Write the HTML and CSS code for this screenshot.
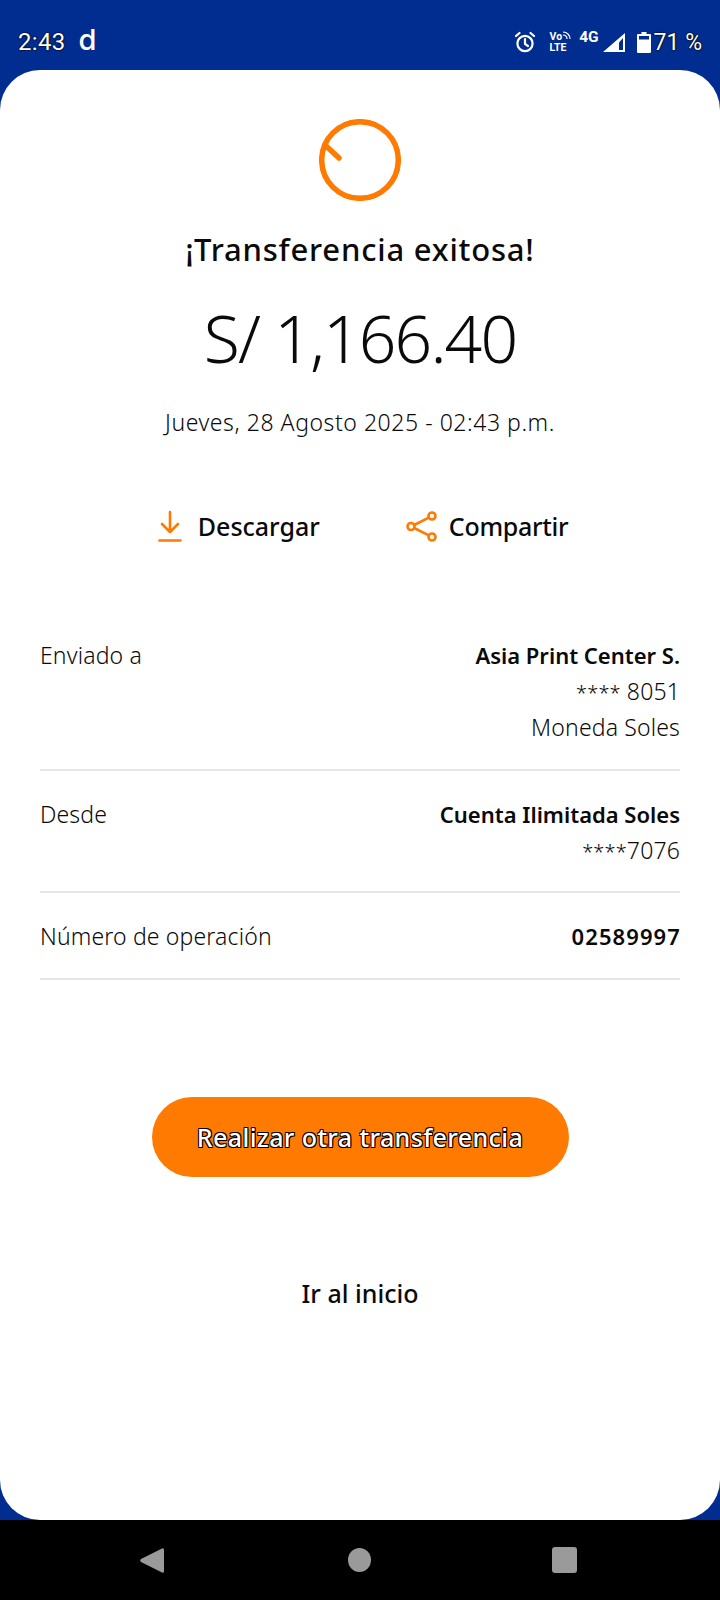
FILE: index.html
```html
<!DOCTYPE html>
<html lang="es">
<head>
    <meta charset="UTF-8">
    <meta name="viewport" content="width=device-width, initial-scale=1.0">
    <title>Transferencia exitosa</title>
    <link rel="stylesheet" href="styles.css">
</head>
<body>
    <div class="status-bar">
        <span class="clock">2:43</span>
        <span class="app-d">d</span>
        <div class="status-icons">
            <svg class="ic-alarm" width="22" height="22" viewBox="0 0 22 22" fill="none" stroke="#fff" stroke-width="2.2" stroke-linecap="round">
                <circle cx="11" cy="12.5" r="7.6"/>
                <path d="M11 8v5l3 2"/>
                <path d="M2 5l3.500-3M20 5l-3.500-3"/>
            </svg>
            <span class="volte">Vo<svg width="9" height="9" viewBox="0 0 9 9" fill="none" stroke="#fff" stroke-width="1.200"><path d="M1 1c4 0 7 3 7 7M1 4c2.500 0 4 1.500 4 4"/></svg><br>LTE</span>
            <span class="net">4G</span>
            <svg class="ic-signal" width="22" height="19" viewBox="0 0 22 19">
                <path d="M22 0v19H0z" fill="#fff"/>
                <path d="M20 5v12h-4V9.500z" fill="#002d8f"/>
            </svg>
            <svg class="ic-battery" width="14" height="21" viewBox="0 0 14 21">
                <path d="M4.500 0h5v2H13a1 1 0 0 1 1 1v17a1 1 0 0 1-1 1H1a1 1 0 0 1-1-1V3a1 1 0 0 1 1-1h3.500z" fill="#fff"/>
                <path d="M2 4h10v3.500H2z" fill="#002d8f"/>
            </svg>
            <span class="pct">71 %</span>
        </div>
    </div>

    <div class="card">
        <svg class="ic-done" width="82" height="82" viewBox="0 0 82 82" fill="none" stroke="#ff7a00" stroke-width="5.500" stroke-linecap="round">
            <circle cx="41" cy="41" r="38.300"/>
            <path d="M6 26l14 13"/>
        </svg>
        <h1 class="title">¡Transferencia exitosa!</h1>
        <div class="amount">S/ 1,166.40</div>
        <p class="date">Jueves, 28 Agosto 2025 - 02:43 p.m.</p>

        <div class="actions">
            <div class="action">
                <svg width="24" height="32" viewBox="0 0 24 32" fill="none" stroke="#ff7a00" stroke-width="2.600" stroke-linecap="round" stroke-linejoin="round">
                    <path d="M12 2v20M4 14l8 8 8-8"/>
                    <path d="M1.500 30.500h21"/>
                </svg>
                <span>Descargar</span>
            </div>
            <div class="action action-share">
                <svg width="31" height="31" viewBox="0 0 31 31" fill="none" stroke="#ff7a00" stroke-width="2.600">
                    <circle cx="5" cy="15.500" r="3.500"/>
                    <circle cx="26" cy="5" r="3.500"/>
                    <circle cx="26" cy="26" r="3.500"/>
                    <path d="M8.200 14L22.800 6.600M8.200 17l14.600 7.400"/>
                </svg>
                <span>Compartir</span>
            </div>
        </div>

        <div class="details">
            <div class="row row-first">
                <span class="label">Enviado a</span>
                <div class="value"><b>Asia Print Center S.</b><br><span class="stars">****</span> 8051<br>Moneda Soles</div>
            </div>
            <div class="row">
                <span class="label">Desde</span>
                <div class="value"><b>Cuenta Ilimitada Soles</b><br><span class="stars">****</span>7076</div>
            </div>
            <div class="row row-last">
                <span class="label">Número de operación</span>
                <div class="value"><b class="num">02589997</b></div>
            </div>
        </div>

        <button type="button" class="btn-main">Realizar otra transferencia</button>
        <div class="link-home">Ir al inicio</div>
    </div>

    <div class="nav-bar">
        <svg class="nav-back" width="24" height="27" viewBox="0 0 24 27"><path d="M22 1.500a1.500 1.500 0 0 1 2 1v22a1.500 1.500 0 0 1-2 1L1 15a2 2 0 0 1 0-3z" fill="#9a9a9a"/></svg>
        <span class="nav-home"></span>
        <span class="nav-recent"></span>
    </div>
</body>
</html>
```

FILE: styles.css
```css
/* Global Styles */
* {
    margin: 0;
    padding: 0;
    box-sizing: border-box;
}
body {
    width: 720px;
    height: 1600px;
    overflow: hidden;
    background: #002d8f;
    font-family: 'Noto Sans', sans-serif;
    color: #0a0a0a;
    display: flex;
    flex-direction: column;
}

/* Status bar */
.status-bar {
    height: 70px;
    display: flex;
    align-items: center;
    padding: 14px 18px 0;
    color: #fff;
}
.clock, .pct {
    font-family: 'Roboto', sans-serif;
    font-size: 24px;
    text-shadow: 0 0 2px #000, 0 0 1px #000, 0 0 1px #000;
}
.clock {
    letter-spacing: 0.3px;
}
.app-d {
    margin-left: 13px;
    margin-top: -6px;
    font-family: 'Inter', sans-serif;
    font-size: 29px;
    font-weight: 500;
}
.status-icons {
    margin-left: auto;
    display: flex;
    align-items: center;
}
.volte {
    margin-left: 14px;
    font-family: 'Roboto', sans-serif;
    font-size: 10.500px;
    font-weight: 700;
    line-height: 11px;
}
.net {
    margin: -10px 0 0 8px;
    font-family: 'Roboto', sans-serif;
    font-size: 15.500px;
    font-weight: 700;
}
.ic-signal {
    margin-left: 4px;
}
.ic-battery {
    margin-left: 12px;
}
.pct {
    margin-left: 3px;
    font-size: 23px;
}

/* Card */
.card {
    flex: 1;
    background: #fff;
    border-radius: 40px;
    padding: 49px 40px 0;
    display: flex;
    flex-direction: column;
    align-items: center;
}
.title {
    margin-top: 28px;
    font-size: 31px;
    line-height: 40px;
    font-weight: 500;
    letter-spacing: 0.8px;
}
.amount {
    margin-top: 25px;
    font-size: 66px;
    line-height: 86px;
    font-weight: 300;
    letter-spacing: -1.900px;
}
.date {
    margin-top: 26px;
    font-size: 23px;
    line-height: 32px;
    font-weight: 300;
    letter-spacing: 0.55px;
}

/* Actions */
.actions {
    margin-top: 70px;
    margin-left: 6px;
    display: flex;
    align-items: center;
    height: 36px;
}
.action {
    display: flex;
    align-items: center;
    gap: 16px;
    font-size: 25px;
    font-weight: 500;
}
.action-share {
    margin-left: 86px;
    gap: 12px;
    letter-spacing: -0.300px;
}

/* Details */
.details {
    width: 100%;
    margin-top: 93px;
    font-size: 23px;
    line-height: 36px;
    letter-spacing: 0.15px;
}
.row {
    display: flex;
    justify-content: space-between;
    padding: 25px 0 23px;
    border-bottom: 2px solid #e4e6e8;
}
.row-first {
    padding: 0 0 24px;
}
.row-last {
    padding-bottom: 24px;
}
.label {
    font-weight: 300;
}
.value {
    text-align: right;
    font-weight: 300;
}
.value b {
    font-size: 22px;
    line-height: 1;
    font-weight: 600;
    letter-spacing: 0;
}
.value .num {
    letter-spacing: 1.100px;
    margin-right: -1px;
}
.stars {
    font-size: 20px;
    line-height: 1;
}

/* Buttons */
.btn-main {
    margin-top: 117px;
    width: 417px;
    height: 80px;
    border: none;
    border-radius: 40px;
    background: #ff7a00;
    color: #fff;
    font-family: inherit;
    font-size: 25px;
    font-weight: 500;
    letter-spacing: 0.4px;
    text-shadow: 1px 1px 0 #000, -1px -1px 0 #000, 1px -1px 0 #000, -1px 1px 0 #000;
}
.link-home {
    margin-top: 98px;
    font-size: 25px;
    line-height: 36px;
    font-weight: 500;
}

/* Nav bar */
.nav-bar {
    height: 80px;
    background: #000;
    display: flex;
    align-items: center;
    padding-left: 140px;
}
.nav-home {
    margin-left: 184px;
    width: 23px;
    height: 24px;
    border-radius: 50%;
    background: #9a9a9a;
}
.nav-recent {
    margin-left: 181px;
    width: 25px;
    height: 26px;
    border-radius: 3px;
    background: #9a9a9a;
}
```
